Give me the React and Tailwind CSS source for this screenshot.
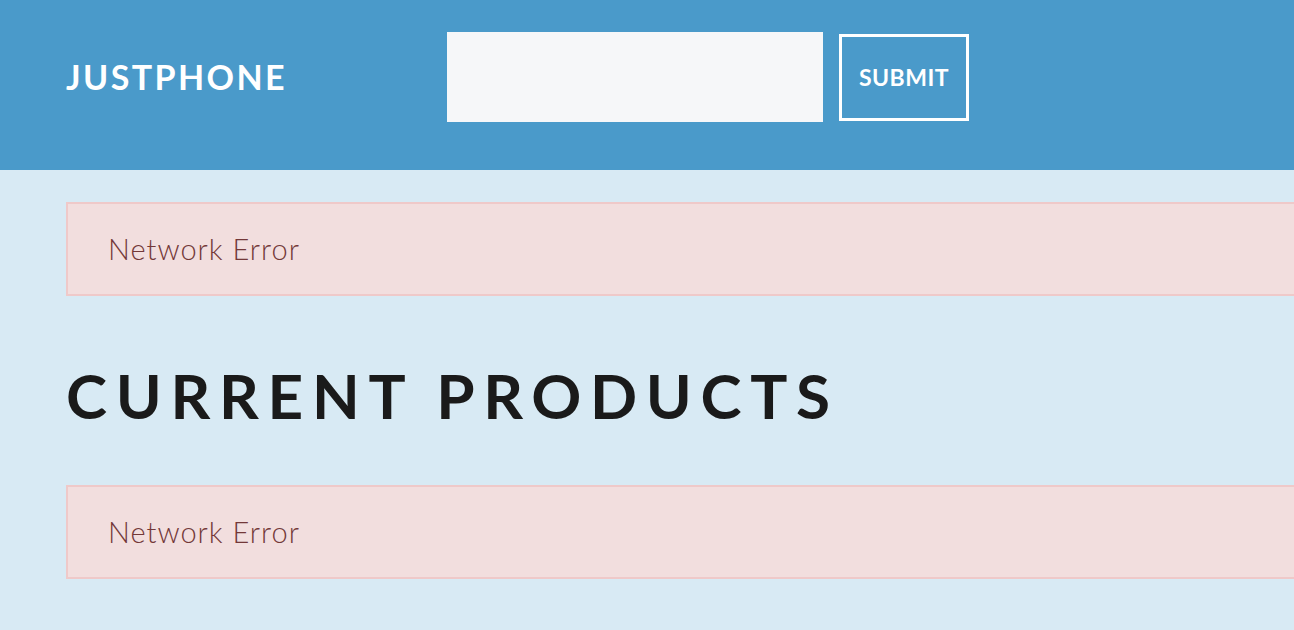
export default function App() {
  return (
    <div className="min-h-[630px] w-full overflow-hidden bg-[#d8eaf4]" style={{ fontFamily: "Lato, 'Open Sans', sans-serif" }}>
      <header className="h-[170px] bg-[#4a9aca] pt-8">
        <div className="flex h-[90px] items-center">
          <div className="ml-[66px] w-[381px] text-[34px] font-bold leading-none tracking-[2.4px] text-white">JUSTPHONE</div>
          <input className="h-[90px] w-[376px] bg-[#f6f7f9] outline-none" />
          <button className="ml-4 flex h-[87px] w-[130px] items-center justify-center border-[3px] border-white text-[23px] font-bold tracking-[0.5px] text-white">SUBMIT</button>
        </div>
      </header>
      <main className="pl-[66px] pt-8">
        <div className="-mr-4 flex h-[94px] items-center border-2 border-[#efc9c9] bg-[#f2dede] pl-[40px] text-[29px] font-light tracking-[1px] text-[#733838]">
          Network Error
        </div>
        <h1 className="mt-[68px] text-[62px] font-bold leading-none tracking-[8.7px] text-[#1a1a1a]">CURRENT PRODUCTS</h1>
        <div className="-mr-4 mt-[59px] flex h-[94px] items-center border-2 border-[#efc9c9] bg-[#f2dede] pl-[40px] text-[29px] font-light tracking-[1px] text-[#733838]">
          Network Error
        </div>
      </main>
    </div>
  );
}
